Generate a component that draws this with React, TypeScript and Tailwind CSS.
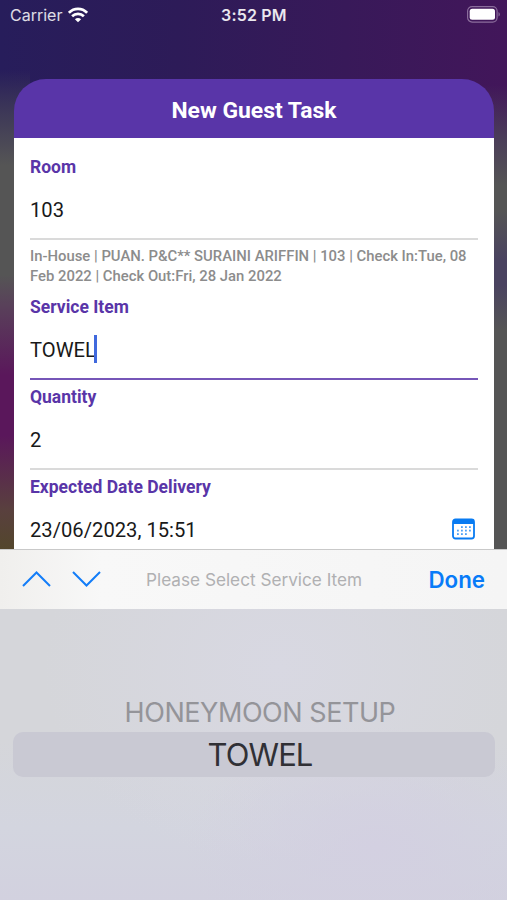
import type { ReactNode } from "react"

function StatusBar() {
  return (
    <div className="relative flex h-[30px] items-center justify-between pl-[10px] pr-[6px] text-white">
      <div className="flex items-center gap-[6px]">
        <span className="font-[Inter,sans-serif] text-[16px] leading-none text-white/85">Carrier</span>
        <svg width="20" height="16" viewBox="0 0 20 16" fill="none" stroke="currentColor" strokeWidth="2.7">
          <path d="M0.9 5.8C6 0.6 14 0.6 19.1 5.8" />
          <path d="M4.1 9.3C7.4 6.1 12.6 6.1 15.9 9.3" />
          <path d="M10 15.3L6.9 12.2C8.7 10.6 11.3 10.6 13.1 12.2Z" fill="currentColor" stroke="none" />
        </svg>
      </div>
      <span className="absolute left-[221px] font-[Inter,sans-serif] text-[16px] font-semibold leading-none tracking-[0.2px] text-white/90">
        3:52 PM
      </span>
      <svg width="34" height="17" viewBox="0 0 34 17" className="-mt-[2px]">
        <rect x="0.6" y="0.6" width="29.5" height="15.5" rx="4.5" fill="none" stroke="#8b6d9c" strokeWidth="1.2" />
        <rect x="2.7" y="2.8" width="25.3" height="11" rx="2.5" fill="white" />
        <path d="M31.5 6C33.3 6.8 33.3 9.8 31.5 10.6Z" fill="#8b6d9c" />
      </svg>
    </div>
  )
}

interface FieldProps {
  label: string
  value: string
  focused?: boolean
  children?: ReactNode
}

function Field({ label, value, focused, children }: FieldProps) {
  return (
    <div className="h-[90px] pt-[8px]">
      <div className="text-[17.5px] font-bold leading-[20px] text-[#5935a8]">{label}</div>
      <div
        className={`flex h-[63px] items-center border-b-2 text-[20.2px] text-[#191919] ${
          focused ? "border-[#7656b8]" : "border-[#dadada]"
        }`}
      >
        <span className="pt-[5px]">{value}</span>
        {focused && <span className="mt-[2px] -ml-[1.5px] h-[28px] w-[3px] bg-[#4069dd]" />}
        {children}
      </div>
    </div>
  )
}

function CalendarIcon() {
  const dots = [
    [9, 9], [13, 9], [17, 9],
    [5, 12.5], [9, 12.5], [13, 12.5], [17, 12.5],
    [5, 16], [9, 16], [13, 16],
  ]
  return (
    <svg width="23" height="22" viewBox="0 0 23 22" className="mr-[3px] mt-[3px] ml-auto">
      <rect x="1" y="1.5" width="21" height="19" rx="2.5" fill="white" stroke="#087bf2" strokeWidth="1.8" />
      <path d="M1 6V3.5Q1 1 3.5 1H19.5Q22 1 22 3.5V6Z" fill="#087bf2" />
      {dots.map(([x, y]) => (
        <rect key={`${x}-${y}`} x={x} y={y - 0.8} width="1.8" height="1.8" fill="#4b9ff5" />
      ))}
    </svg>
  )
}

function GuestTaskCard() {
  return (
    <div className="ml-[14px] mr-[13px] mt-[49px] flex h-[470px] flex-col font-[Roboto,sans-serif]">
      <div className="flex h-[59px] shrink-0 items-center justify-center rounded-t-[32px] bg-[#5935a8] pt-[6px] text-[22.9px] font-bold text-white">
        New Guest Task
      </div>
      <div className="flex-1 bg-white px-[16px] pt-[11px]">
        <Field label="Room" value="103" />
        <p className="mb-[-1px] h-[51px] whitespace-nowrap pt-[8px] text-[14.85px] font-medium leading-[19.5px] text-[#8c8c8c]">
          In-House | PUAN. P&amp;C** SURAINI ARIFFIN | 103 | Check In:Tue, 08
          <br />
          Feb 2022 | Check Out:Fri, 28 Jan 2022
        </p>
        <Field label="Service Item" value="TOWEL" focused />
        <Field label="Quantity" value="2" />
        <Field label="Expected Date Delivery" value="23/06/2023, 15:51">
          <CalendarIcon />
        </Field>
      </div>
    </div>
  )
}

function PickerToolbar() {
  return (
    <div className="flex h-[60px] shrink-0 items-center border-t border-[#c9c9c9] bg-linear-to-r from-[#f0efed] via-[#f8f8f8] via-20% to-[#f5f5f5] px-[22px] font-[Inter,sans-serif]">
      <svg width="80" height="18" viewBox="0 0 80 18" fill="none" stroke="#137df8" strokeWidth="2" className="-mt-[2px]">
        <path d="M1 16L14.5 2.5L28 16" />
        <path d="M51 2L64.5 15.5L78 2" />
      </svg>
      <span className="ml-[44px] text-[17.2px] text-[#b0b0b2]">Please Select Service Item</span>
      <button className="ml-auto text-[22.3px] font-semibold text-[#087bf8]">Done</button>
    </div>
  )
}

function ItemPicker() {
  return (
    <div className="flex flex-1 flex-col items-center bg-[radial-gradient(ellipse_at_74%_82%,#d3d0e1_0%,#d3d1e100_36%),radial-gradient(ellipse_at_55%_20%,#d8d8e2_0%,#d8d8e200_60%),linear-gradient(#d5d6da_45%,#d3d5df_75%,#d2d1df)] pl-[13px] pr-[12px] font-[Inter,sans-serif]">
      <div className="mt-[85px] flex h-[38px] items-center pl-[12px] text-[27px] tracking-[-0.45px] text-[#949499]">
        HONEYMOON SETUP
      </div>
      <div className="flex h-[45px] w-full items-center justify-center rounded-[10px] bg-[#c9c9d3] pl-[12px] pt-[2px] text-[31px] tracking-[-0.9px] text-[#303035]">
        TOWEL
      </div>
    </div>
  )
}

export default function App() {
  return (
    <div className="flex h-[900px] w-[507px] flex-col overflow-hidden bg-white">
      <div className="relative h-[549px] shrink-0 overflow-hidden bg-linear-to-r from-[#271d5b] via-[#2d1b58] via-35% to-[#42165a]">
        {/* wallpaper seen on either side of the card */}
        <div className="absolute inset-y-0 left-0 w-[30px] bg-[linear-gradient(#271d5b00_70px,#3a3458_105px,#555_165px,#555_275px,#59415a_305px,#5a175b_375px,#5a175b_435px,#59403e_510px,#53462c_549px)]" />
        <div className="absolute inset-y-0 right-0 w-[30px] bg-[linear-gradient(#42165a00_85px,#4b3e59_140px,#555_185px,#555_210px,#4a4360_260px,#4a4360_285px,#555_330px,#555_549px)]" />
        <div className="relative">
          <StatusBar />
          <GuestTaskCard />
        </div>
      </div>
      <PickerToolbar />
      <ItemPicker />
    </div>
  )
}
